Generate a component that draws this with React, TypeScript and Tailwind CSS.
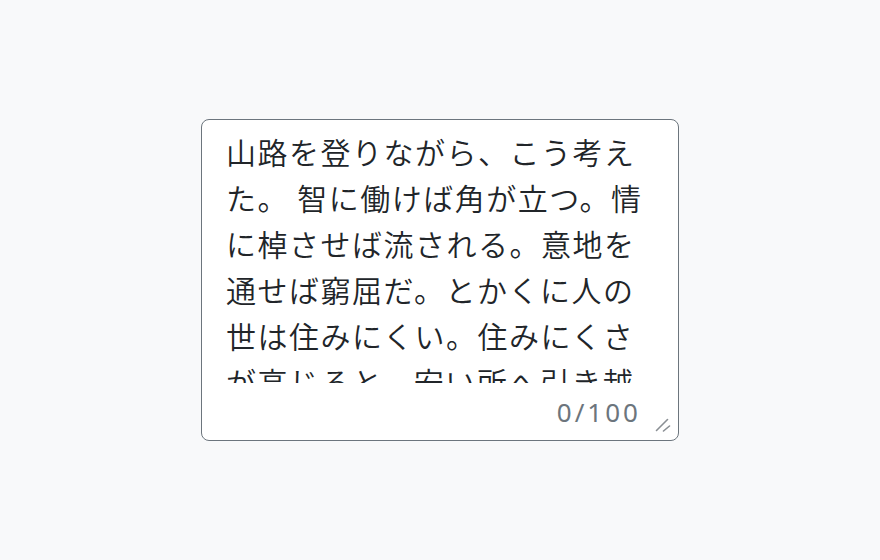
import React from "react";

const TEXT =
  "山路を登りながら、こう考えた。 智に働けば角が立つ。情に棹させば流される。意地を通せば窮屈だ。とかくに人の世は住みにくい。住みにくさが高じると、安い所へ引き越したくなる。どこへ越しても住みにくいと悟った時、詩が生れて、画が出来る。";

const ResizeGrip = () => (
  <svg
    className="absolute right-[7px] bottom-[8px]"
    width="16"
    height="14"
    viewBox="0 0 16 14"
    fill="none"
    stroke="#8a8f94"
    strokeWidth="1.6"
    strokeLinecap="round"
  >
    <path d="M1.5 12.5 L12.5 1.5" />
    <path d="M8.5 13 L14.5 8" />
  </svg>
);

const App: React.FC = () => {
  const [value, setValue] = React.useState(TEXT);

  return (
    <div
      className="h-[560px] w-full bg-[#f8f9fa] flex items-center justify-center"
      style={{ fontFamily: '"Noto Sans CJK JP", "Noto Sans", sans-serif' }}
    >
      <div className="relative w-[478px] h-[322px] flex flex-col bg-white border border-[#6c757d] rounded-lg overflow-hidden">
        <textarea
          value={value}
          onChange={(e) => setValue(e.target.value)}
          className="h-[263px] w-full shrink-0 px-6 pt-2 pb-0 text-[30px] font-[350] leading-[46px] tracking-[0.05em] text-[#212529] bg-transparent resize-none overflow-hidden outline-none border-0"
          style={{ fontFamily: '"Noto Sans CJK JP", sans-serif' }}
        />
        <div className="flex-1 flex items-start justify-end pt-[12px] pr-[37px]">
          <span
            className="text-[26px] leading-[35px] tracking-[3px] text-[#6c757d]"
            style={{ fontFamily: '"Noto Sans", sans-serif' }}
          >
            0/100
          </span>
        </div>
        <ResizeGrip />
      </div>
    </div>
  );
};

export default App;
